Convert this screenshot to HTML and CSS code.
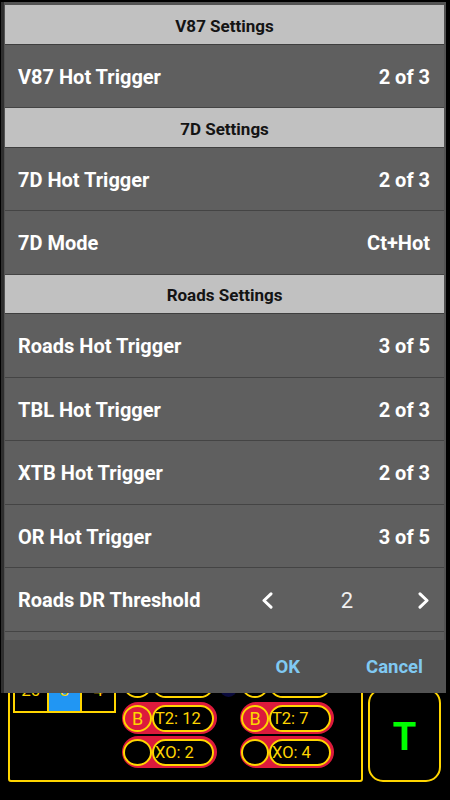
FILE: index.html
```html
<!DOCTYPE html>
<html lang="en">
<head>
<meta charset="utf-8">
<title>Settings</title>
<link rel="stylesheet" href="styles.css">
</head>
<body>
<div class="screen">
  <div class="board">
    <div class="panel">
      <div class="grid">
        <div class="cell">20</div>
        <div class="cell cell-on">8</div>
        <div class="cell">4</div>
      </div>
      <div class="chips chips-a">
        <div class="chip chip-plain"><span class="dot"></span><span class="tag"></span></div>
        <div class="chip"><span class="dot dot-b">B</span><span class="tag">T2: 12</span></div>
        <div class="chip"><span class="dot"></span><span class="tag">XO: 2</span></div>
      </div>
      <div class="mid"><span class="navy"></span></div>
      <div class="chips chips-b">
        <div class="chip chip-plain"><span class="dot"></span><span class="tag"></span></div>
        <div class="chip"><span class="dot dot-b">B</span><span class="tag">T2: 7</span></div>
        <div class="chip"><span class="dot"></span><span class="tag">XO: 4</span></div>
      </div>
    </div>
    <div class="tbox">T</div>
  </div>
</div>

<div class="dialog">
  <div class="list">
    <div class="head">V87 Settings</div>
    <div class="row"><span>V87 Hot Trigger</span><span>2 of 3</span></div>
    <div class="head">7D Settings</div>
    <div class="row"><span>7D Hot Trigger</span><span>2 of 3</span></div>
    <div class="row"><span>7D Mode</span><span>Ct+Hot</span></div>
    <div class="head">Roads Settings</div>
    <div class="row"><span>Roads Hot Trigger</span><span>3 of 5</span></div>
    <div class="row"><span>TBL Hot Trigger</span><span>2 of 3</span></div>
    <div class="row"><span>XTB Hot Trigger</span><span>2 of 3</span></div>
    <div class="row"><span>OR Hot Trigger</span><span>3 of 5</span></div>
    <div class="row"><span>Roads DR Threshold</span>
      <div class="stepper">
        <svg class="chev" viewBox="0 0 12 17" width="12" height="17"><path d="M10 1.8 L3 8.5 L10 15.2" /></svg>
        <span class="step-val">2</span>
        <svg class="chev" viewBox="0 0 12 17" width="12" height="17"><path d="M2 1.8 L9 8.5 L2 15.2" /></svg>
      </div>
    </div>
    <div class="row"></div>
  </div>
  <div class="actions">
    <span class="btn">OK</span>
    <span class="btn">Cancel</span>
  </div>
</div>
</body>
</html>
```

FILE: styles.css
```css
html, body {
  margin: 0;
  padding: 0;
}
body {
  width: 450px;
  height: 800px;
  background: #000;
  position: relative;
  overflow: hidden;
  font-family: Roboto, "Liberation Sans", sans-serif;
}

/* background app screen */
.screen {
  height: 800px;
  display: flex;
  flex-direction: column;
  justify-content: flex-end;
}
.board {
  display: flex;
  align-items: flex-end;
  gap: 5px;
  padding: 0 9px 18px 8px;
}
.panel {
  box-sizing: border-box;
  width: 355px;
  height: 142px;
  border: 2px solid #ffd500;
  border-radius: 0 0 3px 3px;
  display: flex;
  align-items: flex-end;
  padding: 0 0 12px 3px;
}
.grid {
  box-sizing: border-box;
  width: 103px;
  height: 46px;
  display: flex;
  border: 2px solid #ffd500;
  margin-bottom: 55px;
  flex: none;
}
.cell {
  flex: 1;
  display: flex;
  align-items: center;
  justify-content: center;
  color: #ffd500;
  font-size: 17px;
  border-left: 2px solid #ffd500;
}
.cell:first-child {
  border-left: none;
}
.cell-on {
  background: #2196f3;
}
.chips {
  display: flex;
  flex-direction: column;
  gap: 2px;
  flex: none;
}
.chips-a {
  width: 95px;
  margin-left: 6px;
}
.chips-b {
  width: 94px;
  margin-left: 3px;
}
.chip {
  box-sizing: border-box;
  height: 32px;
  display: flex;
  padding: 3px 3px 2px 1px;
  border-radius: 16px;
  background: #dc1a3c;
}
.chip-plain {
  background: transparent;
}
.dot {
  box-sizing: border-box;
  flex: none;
  width: 29px;
  height: 27px;
  border: 2px solid #ffd500;
  border-radius: 50%;
  display: flex;
  align-items: center;
  justify-content: center;
  color: #ffd500;
  font-size: 18px;
}
.chips-b .dot {
  width: 28px;
}
.dot-b {
  background: #dc1a3c;
}
.chips .chip:not(.chip-plain) .dot:not(.dot-b) {
  background: #000;
}
.tag {
  box-sizing: border-box;
  flex: 1;
  height: 27px;
  border: 2px solid #ffd500;
  border-radius: 14px;
  background: #000;
  color: #ffd500;
  font-size: 16.5px;
  display: flex;
  align-items: center;
  padding-left: 1px;
  white-space: nowrap;
}
.mid {
  align-self: flex-start;
  width: 17px;
  margin-left: 3px;
  padding-top: 38px;
  flex: none;
}
.navy {
  display: block;
  width: 17px;
  height: 17px;
  border-radius: 50%;
  background: #0a0a3c;
}
.tbox {
  box-sizing: border-box;
  width: 73px;
  height: 94px;
  border: 2px solid #ffd500;
  border-radius: 15px;
  display: flex;
  align-items: center;
  justify-content: center;
  color: #00ff00;
  font-size: 38px;
  font-weight: 700;
  padding-top: 4px;
}

/* dialog */
.dialog {
  position: absolute;
  left: 1px;
  top: 2px;
  width: 445px;
  height: 691px;
  box-sizing: border-box;
  background: #535353;
  border-left: 3px solid #2f2f2f;
  padding: 3px 2px 0 1px;
  display: flex;
  flex-direction: column;
}
.list {
  height: 635px;
  overflow: hidden;
  flex: none;
}
.head {
  box-sizing: border-box;
  height: 39.5px;
  border-bottom: 1px solid #3e3e3e;
  background: #c1c1c1;
  color: #141414;
  font-size: 17px;
  font-weight: 700;
  padding-top: 3px;
  display: flex;
  align-items: center;
  justify-content: center;
}
.row {
  box-sizing: border-box;
  height: 63.5px;
  border-bottom: 1px solid #444;
  background: #5f5f5f;
  padding: 2px 14px 0 13px;
  display: flex;
  align-items: center;
  justify-content: space-between;
  color: #fff;
  font-size: 20px;
  font-weight: 700;
}
.stepper {
  width: 169px;
  display: flex;
  align-items: center;
  justify-content: space-between;
}
.chev {
  display: block;
}
.chev path {
  fill: none;
  stroke: #fff;
  stroke-width: 3;
  stroke-linecap: round;
  stroke-linejoin: round;
}
.step-val {
  font-size: 22px;
  font-weight: 400;
  color: #f0f0f0;
  padding-left: 3px;
}
.actions {
  flex: 1;
  display: flex;
  align-items: center;
  justify-content: flex-end;
  gap: 66px;
  padding-right: 21px;
}
.btn {
  color: #80c9f2;
  font-size: 18.5px;
  font-weight: 700;
}
```
